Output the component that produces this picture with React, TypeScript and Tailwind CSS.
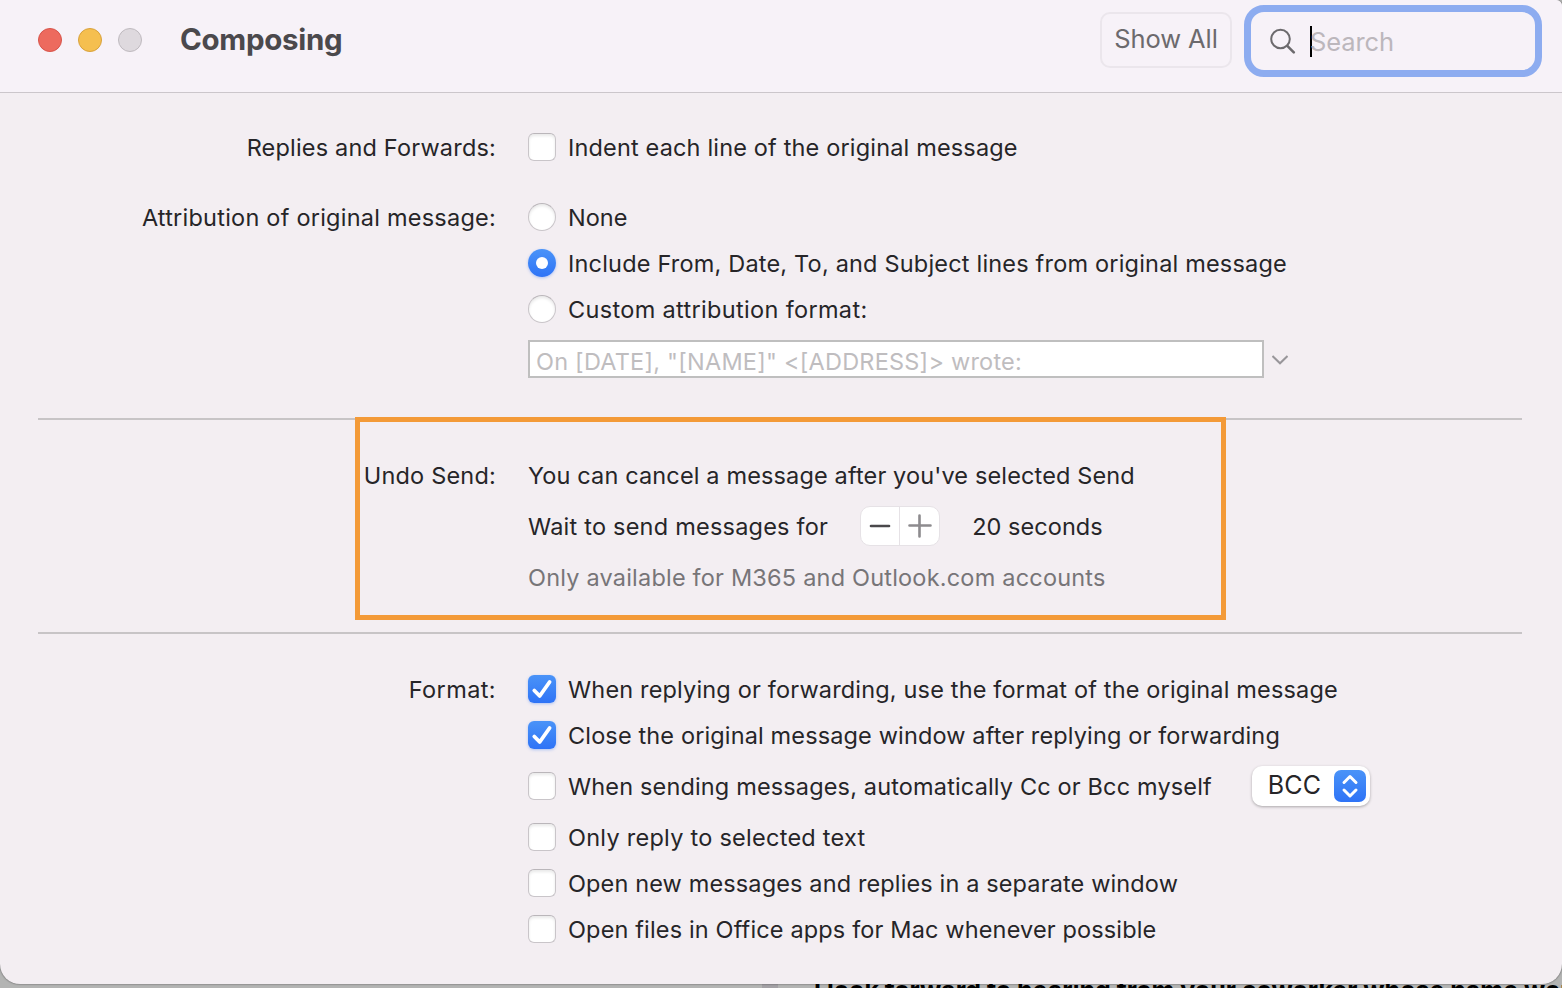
import type { ReactNode } from "react";

function Box({ checked = false }: { checked?: boolean }) {
  return checked ? (
    <span className="mb-0.5 flex size-7 shrink-0 items-center justify-center rounded-[6px] bg-gradient-to-b from-[#4a93f8] to-[#2f73f6] shadow-[0_1px_3px_rgba(47,115,246,0.35)]">
      <svg width="28" height="28" viewBox="0 0 28 28" fill="none" stroke="#fff" strokeWidth="3.8" strokeLinecap="round" strokeLinejoin="round">
        <path d="M6.300 15.500 11.700 21 21.600 7" />
      </svg>
    </span>
  ) : (
    <span className="mb-0.5 size-7 shrink-0 rounded-[6px] border border-[#c9c5c9] border-t-[#bab6ba] bg-white shadow-[inset_0_2px_3px_rgba(0,0,0,0.09)]" />
  );
}

function Radio({ checked = false }: { checked?: boolean }) {
  return checked ? (
    <span className="mb-0.5 flex size-7 shrink-0 items-center justify-center rounded-full bg-gradient-to-b from-[#4a93f8] to-[#2f73f6] shadow-[0_1px_3px_rgba(47,115,246,0.35)]">
      <span className="size-3 rounded-full bg-white" />
    </span>
  ) : (
    <span className="mb-0.5 size-7 shrink-0 rounded-full border border-[#c9c5c9] border-t-[#bab6ba] bg-white shadow-[inset_0_2px_3px_rgba(0,0,0,0.09)]" />
  );
}

function Row({ label, tracking = "", className, children }: { label?: string; tracking?: string; className: string; children: ReactNode }) {
  return (
    <div className={`grid grid-cols-[496px_1fr] items-center gap-x-8 ${className}`}>
      <span className={`text-right whitespace-nowrap ${tracking}`}>{label}</span>
      <div className="flex items-center gap-3 whitespace-nowrap">{children}</div>
    </div>
  );
}

export default function App() {
  return (
    <div className="flex h-[988px] w-[1562px] flex-col overflow-hidden bg-[#b3b4b3] font-['Inter',sans-serif] text-[23.5px] leading-[30px] text-[#262528]">
      <main className="z-10 h-[984px] shrink-0 overflow-hidden rounded-b-[20px] rounded-tr-[6px] bg-[#f3eef2] shadow-[0_0_2px_rgba(0,0,0,0.6)]">
        <header className="flex h-[93px] items-start border-b border-[#cbc6cb] bg-[#f7f2f8] pr-5 pl-[38px]">
          <div className="mt-7 flex gap-4">
            <i className="size-6 rounded-full border border-[#d8544a] bg-[#ed6a5e]" />
            <i className="size-6 rounded-full border border-[#d9a23c] bg-[#f5bf4f]" />
            <i className="size-6 rounded-full border border-[#bfbabf] bg-[#ded9de]" />
          </div>
          <h1 className="mt-[19px] ml-[38px] text-[29.5px] leading-10 font-bold tracking-[-0.3px] text-[#4b494c]">Composing</h1>
          <button className="mt-3 mr-3 ml-auto h-14 w-[132px] rounded-[10px] border-2 border-[#ebe6ec] pb-0.5 text-[25.5px] tracking-[-0.1px] text-[#6c6a6d]">Show All</button>
          <div className="mt-[5px] flex h-[72px] w-[298px] items-center rounded-[20px] border-[7px] border-[#8dacf0] pl-[18px]">
            <svg width="28" height="28" viewBox="0 0 28 28" fill="none" stroke="#6c6a6d" strokeWidth="2" strokeLinecap="round">
              <circle cx="11.5" cy="12" r="9.3" /><path d="m18.300 18.800 6.500 6.500" strokeWidth="2.6" />
            </svg>
            <span className="ml-[13px] h-[31px] w-0.5 bg-black" />
            <span className="-ml-0.5 pt-0.5 text-[25.5px] tracking-[-0.1px] text-[#bcb7bc]">Search</span>
          </div>
        </header>

        <section className="h-[325px] pt-10">
          <Row label="Replies and Forwards:" tracking="tracking-[0.18px]" className="h-[29px]"><Box /><span className="tracking-[0.16px]">Indent each line of the original message</span></Row>
          <Row label="Attribution of original message:" tracking="tracking-[0.23px]" className="mt-[33px] h-[46px]"><Radio />None</Row>
          <Row className="h-[46px]"><Radio checked /><span className="tracking-[0.19px]">Include From, Date, To, and Subject lines from original message</span></Row>
          <Row className="h-[46px]"><Radio /><span className="tracking-[0.33px]">Custom attribution format:</span></Row>
          <div className="mt-[7px] ml-[528px] flex items-center gap-2">
            <div className="h-[38px] w-[736px] border-2 border-[#bfbfbf] bg-white pt-[5px] pl-1.5 tracking-[0.22px] text-[#bfbdbf]">On [DATE], "[NAME]" &lt;[ADDRESS]&gt; wrote:</div>
            <svg width="16" height="10" viewBox="0 0 16 10" className="mt-0.5" fill="none" stroke="#98969a" strokeWidth="2"><path d="m.5 1 7.500 7.300L15.500 1" /></svg>
          </div>
        </section>

        <section className="relative mr-10 ml-[38px] h-[216px] border-y-2 border-[#c7c4c6]">
          <div className="-ml-[38px] pt-[30px]">
            <Row label="Undo Send:" tracking="tracking-[0.2px]" className="h-[51px]"><span className="tracking-[0.14px]">You can cancel a message after you've selected Send</span></Row>
            <Row className="h-[51px]">
              <span className="tracking-[0.22px]">Wait to send messages for</span>
              <span className="mb-0.5 ml-5 flex h-10 w-20 rounded-[10px] border border-[#e6e2e6] bg-white">
                <svg width="78" height="38" viewBox="0 0 78 38" fill="none" strokeLinecap="round"><path d="M38.500 0v38" stroke="#e6e2e6" /><path d="M10 19h18" stroke="#4a484b" strokeWidth="2.6" /><path d="M48.500 18.500h21M58.500 8.500v21" stroke="#8d8b8e" strokeWidth="2.6" /></svg>
              </span>
              <span className="ml-5 tracking-[0.05px]">20 seconds</span>
            </Row>
            <Row className="h-[51px] text-[#777578]"><span className="tracking-[0.2px]">Only available for M365 and Outlook.com accounts</span></Row>
          </div>
          <div className="absolute -top-[3px] left-[317px] h-[203px] w-[871px] border-[5px] border-[#f39a38]" />
        </section>

        <section className="pt-[33px]">
          <Row label="Format:" tracking="tracking-[0.4px]" className="h-[46px]"><Box checked /><span className="tracking-[0.165px]">When replying or forwarding, use the format of the original message</span></Row>
          <Row className="h-[46px]"><Box checked /><span className="tracking-[0.135px]">Close the original message window after replying or forwarding</span></Row>
          <Row className="h-14">
            <Box /><span className="tracking-[0.15px]">When sending messages, automatically Cc or Bcc myself</span>
            <span className="mb-0.5 ml-7 flex h-10 w-[118px] items-center justify-between rounded-[10px] bg-white pr-1 pl-4 text-[25px] shadow-[0_1px_3px_rgba(0,0,0,0.3)]">
              <span className="pb-0.5 tracking-[0.1px]">BCC</span>
              <svg width="32" height="32" viewBox="0 0 32 32" fill="none" stroke="#fff" strokeWidth="3" strokeLinecap="round" strokeLinejoin="round" className="rounded-[7px] bg-gradient-to-b from-[#4a93f8] to-[#2f73f6]"><path d="m10 12.500 6-6 6 6M10 20l6 6 6-6" /></svg>
            </span>
          </Row>
          <Row className="h-[46px]"><Box /><span className="tracking-[0.26px]">Only reply to selected text</span></Row>
          <Row className="h-[46px]"><Box /><span className="tracking-[0.13px]">Open new messages and replies in a separate window</span></Row>
          <Row className="h-[46px]"><Box /><span className="tracking-[0.145px]">Open files in Office apps for Mac whenever possible</span></Row>
        </section>
      </main>
      <footer className="flex h-1 shrink-0">
        <div className="ml-[762px] h-1 w-4 shrink-0 bg-[#a3a1a5]" />
        <p className="-mt-[6px] ml-9 text-[25px] leading-6 font-bold whitespace-nowrap text-black">I look forward to hearing from your coworker whose name would</p>
      </footer>
    </div>
  );
}
